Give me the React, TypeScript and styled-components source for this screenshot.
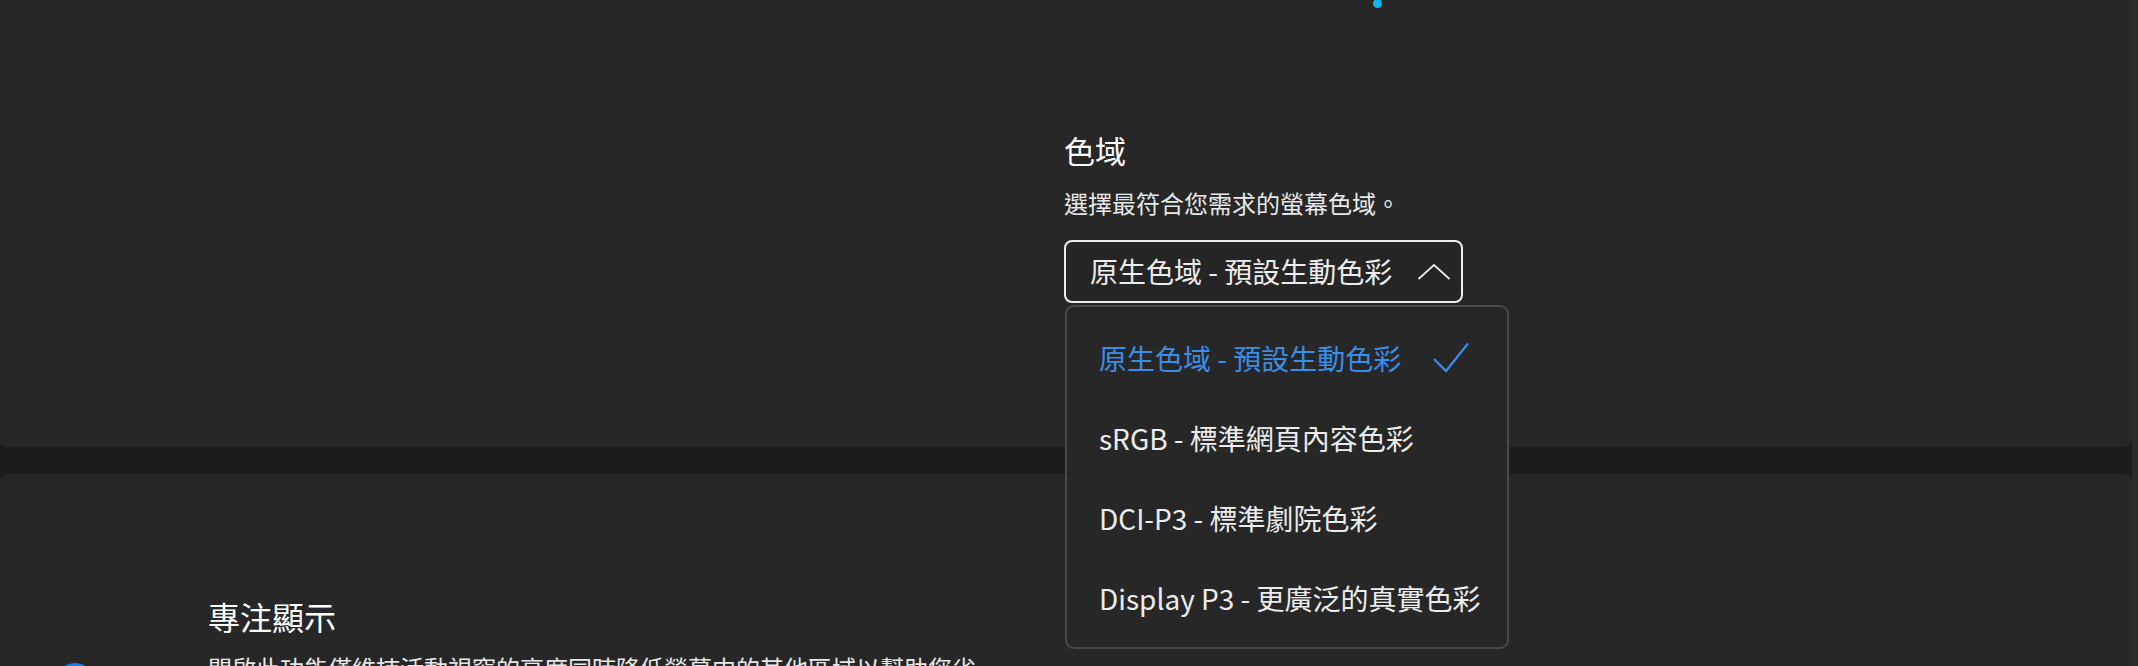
import React from "react";
import styled, { createGlobalStyle } from "styled-components";

const GlobalStyle = createGlobalStyle`
  html, body {
    margin: 0;
    padding: 0;
    background: #1c1c1c;
    overflow: hidden;
  }
  body {
    font-family: "Noto Sans CJK TC", "Noto Sans", sans-serif;
    color: #ffffff;
  }
`;

const Page = styled.div`
  display: flex;
  height: 666px;
  overflow: hidden;
`;

const Content = styled.div`
  flex: 1;
  display: flex;
  flex-direction: column;
  gap: 27px;
  min-width: 0;
`;

const ScrollTrack = styled.div`
  width: 6px;
  flex: none;
  background: #2b2b2b;
`;

const Card = styled.section<{ $height?: number; $padTop?: number }>`
  background: #272727;
  border-radius: ${(p) => (p.$height ? "0 0 7px 7px" : "7px 7px 0 0")};
  height: ${(p) => (p.$height ? `${p.$height}px` : "auto")};
  flex: ${(p) => (p.$height ? "none" : "1")};
  padding-top: ${(p) => p.$padTop ?? 0}px;
  box-sizing: border-box;
`;

const Columns = styled.div`
  display: grid;
  grid-template-columns: 1064px 1fr;
  height: 100%;
`;

const Section = styled.div`
  display: flex;
  flex-direction: column;
  align-items: flex-start;
`;

const Dot = styled.span`
  width: 9px;
  height: 9px;
  border-radius: 50%;
  background: #12b5ef;
  margin: -1px 0 0 309px;
`;

const Title = styled.h2<{ $mt?: number }>`
  margin: ${(p) => p.$mt ?? 0}px 0 0;
  font-size: 31px;
  line-height: 40px;
  font-weight: 400;
  color: #ffffff;
`;

const Desc = styled.p<{ $mt?: number }>`
  margin: ${(p) => p.$mt ?? 0}px 0 0;
  font-size: 24px;
  line-height: 32px;
  color: #e8e8e8;
  white-space: nowrap;
`;

const Paragraph = styled.p`
  margin: 15px 0 0;
  width: 770px;
  font-size: 24px;
  line-height: 32px;
  color: #e8e8e8;
`;

const SelectWrap = styled.div`
  position: relative;
  margin-top: 21px;
`;

const SelectButton = styled.button`
  display: flex;
  align-items: center;
  justify-content: space-between;
  width: 399px;
  height: 63px;
  box-sizing: border-box;
  padding: 0 10px 0 24px;
  background: #252525;
  border: 2px solid #ececec;
  border-radius: 8px;
  font-family: inherit;
  font-size: 28px;
  line-height: 59px;
  color: #ececec;
  cursor: pointer;
`;

const Menu = styled.ul`
  position: absolute;
  top: calc(100% + 2px);
  left: 1px;
  z-index: 5;
  width: 444px;
  box-sizing: border-box;
  margin: 0;
  padding: 11px 0 9px;
  list-style: none;
  background: #272727;
  border: 2px solid #4a4a4a;
  border-radius: 9px;
`;

const MenuItem = styled.li<{ $selected?: boolean }>`
  display: flex;
  align-items: center;
  justify-content: space-between;
  height: 80px;
  padding: 0 38px 0 32px;
  font-size: 28px;
  line-height: 80px;
  white-space: nowrap;
  color: ${(p) => (p.$selected ? "#3a8ee8" : "#ececec")};
`;

const Row = styled.div`
  display: flex;
  align-items: flex-start;
  padding-left: 55px;
`;

const IconCircle = styled.span`
  flex: none;
  width: 40px;
  height: 40px;
  border-radius: 50%;
  background: #1e7ee0;
  margin: 68px 113px 0 0;
`;

const TextCol = styled.div`
  display: flex;
  flex-direction: column;
`;

const BigTitle = styled(Title)`
  font-size: 32px;
  line-height: 42px;
`;

const Chevron = () => (
  <svg width="34" height="18" viewBox="0 0 34 18" fill="none">
    <polyline points="1.5,16 17,2 32.5,16" stroke="#ececec" strokeWidth="1.7" strokeLinejoin="miter" />
  </svg>
);

const Check = () => (
  <svg width="36" height="32" viewBox="0 0 36 32" fill="none">
    <polyline points="1,17 13,29 35,1.5" stroke="#3a8ee8" strokeWidth="2.2" />
  </svg>
);

const options = [
  "原生色域 - 預設生動色彩",
  "sRGB - 標準網頁內容色彩",
  "DCI-P3 - 標準劇院色彩",
  "Display P3 - 更廣泛的真實色彩",
];

export default function App() {
  const selected = 0;
  return (
    <>
      <GlobalStyle />
      <Page>
        <Content>
          <Card $height={447}>
            <Columns>
              <div />
              <Section>
                <Dot />
                <Title $mt={122}>色域</Title>
                <Desc $mt={17}>選擇最符合您需求的螢幕色域。</Desc>
                <SelectWrap>
                  <SelectButton>
                    <span>{options[selected]}</span>
                    <Chevron />
                  </SelectButton>
                  <Menu>
                    {options.map((o, i) => (
                      <MenuItem key={o} $selected={i === selected}>
                        <span>{o}</span>
                        {i === selected && <Check />}
                      </MenuItem>
                    ))}
                  </Menu>
                </SelectWrap>
              </Section>
            </Columns>
          </Card>
          <Card $padTop={121}>
            <Row>
              <IconCircle />
              <TextCol>
                <BigTitle>專注顯示</BigTitle>
                <Paragraph>開啟此功能僅維持活動視窗的亮度同時降低螢幕中的其他區域以幫助您省電。</Paragraph>
              </TextCol>
            </Row>
          </Card>
        </Content>
        <ScrollTrack />
      </Page>
    </>
  );
}
